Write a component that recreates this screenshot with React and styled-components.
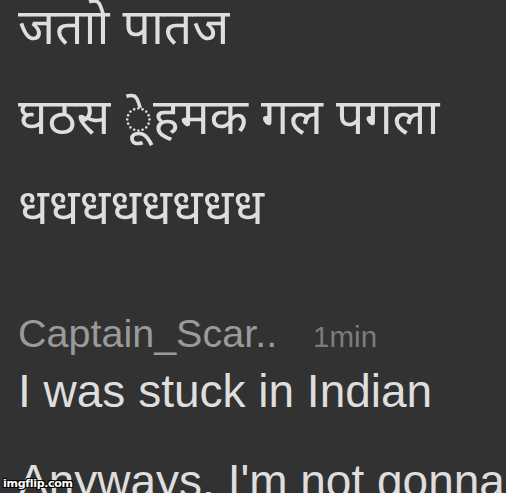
import React from 'react'
import styled, { createGlobalStyle } from 'styled-components'

const GlobalStyle = createGlobalStyle`
  * { box-sizing: border-box; }
  html, body { margin: 0; padding: 0; background: #323232; }
`

const Page = styled.div`
  position: relative;
  width: 506px;
  height: 493px;
  overflow: hidden;
  background: #323232;
  padding: 0 0 0 18px;
  font-family: "Liberation Sans", Arial, sans-serif;
  color: #dedede;
`

const Feed = styled.div`
  display: flex;
  flex-direction: column;
  margin-top: ${p => p.offset}px;
`

const Line = styled.div`
  font-family: ${p => (p.deva ? '"Noto Sans", "Noto Sans Devanagari", "Lohit Devanagari", sans-serif' : '"Liberation Sans", Arial, sans-serif')};
  font-size: ${p => (p.deva ? 50 : 46)}px;
  line-height: 90px;
  white-space: nowrap;
`

const Header = styled.div`
  display: flex;
  align-items: baseline;
  gap: 36px;
  line-height: 34px;
  margin-top: 66px;
`

const Name = styled.span`
  font-size: 39.5px;
  color: #9a9a9a;
`

const Time = styled.span`
  font-size: 29.5px;
  color: #7c7c7c;
`

const Messages = styled.div`
  display: flex;
  flex-direction: column;
  margin-top: -8px;
`

const Watermark = styled.div`
  position: absolute;
  left: 3px;
  bottom: 3px;
  font-family: "DejaVu Sans", sans-serif;
  font-size: 11px;
  font-weight: bold;
  color: #fff;
  letter-spacing: -0.3px;
  text-shadow: -1px -1px 0 #000, 1px -1px 0 #000, -1px 1px 0 #000, 1px 1px 0 #000;
`

export default function App() {
  return (
    <Page>
      <GlobalStyle />
      <Feed offset={-20}>
        <Line deva>जताो पातज</Line>
        <Line deva>घठस ◌ेूहमक गल पगला</Line>
        <Line deva>धधधधधधधध</Line>
      </Feed>
      <Header>
        <Name>Captain_Scar..</Name>
        <Time>1min</Time>
      </Header>
      <Messages>
        <Line>I was stuck in Indian</Line>
        <Line>Anyways, I'm not gonna</Line>
      </Messages>
      <Watermark>imgflip.com</Watermark>
    </Page>
  )
}
